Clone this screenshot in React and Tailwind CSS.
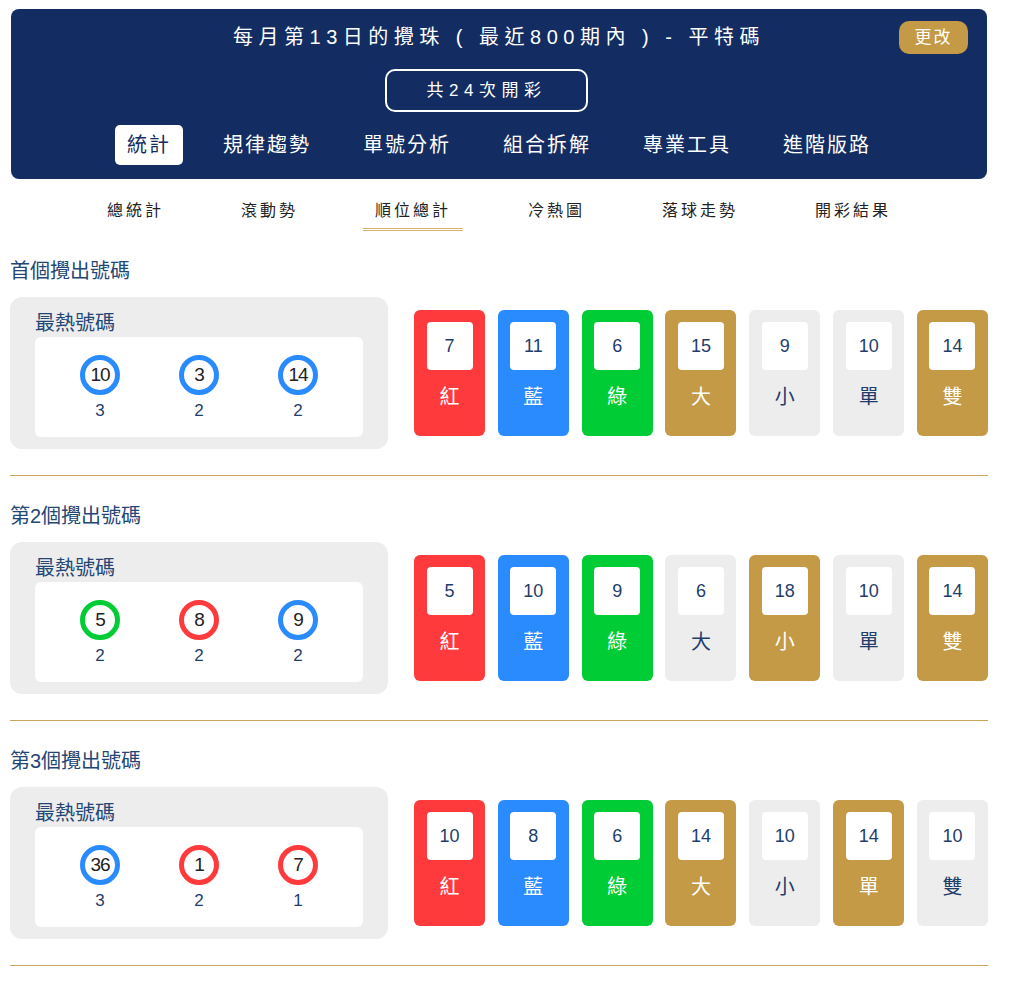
import React from 'react';

const FONT = { fontFamily: '"Liberation Sans", Arial, "Noto Sans CJK TC", sans-serif' };

const ringColor = {
  red: 'border-[#ff3a3d]',
  blue: 'border-[#2a8bff]',
  green: 'border-[#00cc35]',
};

const cardColor = {
  red: 'bg-[#ff3a3d] text-white',
  blue: 'bg-[#2a8bff] text-white',
  green: 'bg-[#00cc35] text-white',
  gold: 'bg-[#c49a46] text-white',
  grey: 'bg-[#ededed] text-[#1f3d6b]',
};

const sections = [
  {
    title: '首個攪出號碼',
    hot: [
      { n: 10, c: 'blue', cnt: 3 },
      { n: 3, c: 'blue', cnt: 2 },
      { n: 14, c: 'blue', cnt: 2 },
    ],
    cards: [
      { v: 7, l: '紅', c: 'red' },
      { v: 11, l: '藍', c: 'blue' },
      { v: 6, l: '綠', c: 'green' },
      { v: 15, l: '大', c: 'gold' },
      { v: 9, l: '小', c: 'grey' },
      { v: 10, l: '單', c: 'grey' },
      { v: 14, l: '雙', c: 'gold' },
    ],
  },
  {
    title: '第2個攪出號碼',
    hot: [
      { n: 5, c: 'green', cnt: 2 },
      { n: 8, c: 'red', cnt: 2 },
      { n: 9, c: 'blue', cnt: 2 },
    ],
    cards: [
      { v: 5, l: '紅', c: 'red' },
      { v: 10, l: '藍', c: 'blue' },
      { v: 9, l: '綠', c: 'green' },
      { v: 6, l: '大', c: 'grey' },
      { v: 18, l: '小', c: 'gold' },
      { v: 10, l: '單', c: 'grey' },
      { v: 14, l: '雙', c: 'gold' },
    ],
  },
  {
    title: '第3個攪出號碼',
    hot: [
      { n: 36, c: 'blue', cnt: 3 },
      { n: 1, c: 'red', cnt: 2 },
      { n: 7, c: 'red', cnt: 1 },
    ],
    cards: [
      { v: 10, l: '紅', c: 'red' },
      { v: 8, l: '藍', c: 'blue' },
      { v: 6, l: '綠', c: 'green' },
      { v: 14, l: '大', c: 'gold' },
      { v: 10, l: '小', c: 'grey' },
      { v: 14, l: '單', c: 'gold' },
      { v: 10, l: '雙', c: 'grey' },
    ],
  },
];

const mainTabs = ['統計', '規律趨勢', '單號分析', '組合拆解', '專業工具', '進階版路'];
const subTabs = ['總統計', '滾動勢', '順位總計', '冷熱圖', '落球走勢', '開彩結果'];

function Section({ data }) {
  return (
    <div className="border-b border-[#c9a55c] pb-[26px] pt-[26px]">
      <h3 className="text-[20px] leading-[28px] text-[#234775] mb-[12px]">{data.title}</h3>
      <div className="flex items-center gap-[26px]">
        <div className="w-[378px] bg-[#ededed] rounded-[12px] pt-[13px] pb-[12px] px-[25px]">
          <div className="text-[20px] leading-[27px] text-[#234775]">最熱號碼</div>
          <div className="bg-white rounded-[6px] h-[100px] flex justify-between px-[45px] pt-[18px]">
            {data.hot.map((h, i) => (
              <div key={i} className="flex flex-col items-center">
                <div className={`w-[40px] h-[40px] rounded-full border-[5px] ${ringColor[h.c]} flex items-center justify-center text-[19px] text-[#222] bg-white tracking-[-1px]`}>
                  {h.n}
                </div>
                <div className="text-[17px] leading-[32px] text-[#1f3d6b]">{h.cnt}</div>
              </div>
            ))}
          </div>
        </div>
        <div className="flex-1 flex justify-between">
          {data.cards.map((c, i) => (
            <div key={i} className={`w-[71px] h-[126px] rounded-[6px] ${cardColor[c.c]} flex flex-col items-center pt-[12px]`}>
              <div className="w-[46px] h-[48px] bg-white rounded-[4px] flex items-center justify-center text-[18px] text-[#1f3d6b]">
                {c.v}
              </div>
              <div className="mt-[13px] text-[20px] leading-[28px]">{c.l}</div>
            </div>
          ))}
        </div>
      </div>
    </div>
  );
}

export default function App() {
  return (
    <div className="bg-white min-h-screen" style={FONT}>
      <div className="w-[978px] ml-[10px] pt-[9px]">
        <div className="bg-[#132d62] rounded-[8px] ml-[1px] w-[976px] pt-[12px] pb-[14px] px-[19px]">
          <div className="grid grid-cols-[1fr_auto_1fr] items-center">
            <div />
            <div className="text-white text-[20px] tracking-[5.5px] leading-[33px]">每月第13日的攪珠 ( 最近800期內 ) - 平特碼</div>
            <div className="justify-self-end">
              <button className="bg-[#c49a46] text-white text-[17px] tracking-[2px] rounded-[10px] w-[69px] h-[33px]">更改</button>
            </div>
          </div>
          <div className="flex justify-center mt-[15px] pr-[25px]">
            <div className="border-2 border-white rounded-[10px] w-[203px] h-[43px] flex items-center justify-center text-white text-[17px] tracking-[5.5px]">
              共24次開彩
            </div>
          </div>
          <div className="flex justify-center gap-[28px] mt-[13px]">
            {mainTabs.map((t, i) => (
              <div
                key={t}
                className={`h-[40px] px-[12px] flex items-center text-[20px] tracking-[2px] rounded-[5px] ${i === 0 ? 'bg-white text-[#132d62]' : 'text-white'}`}
              >
                {t}
              </div>
            ))}
          </div>
        </div>

        <div className="flex justify-center gap-[53px] mt-[21px]">
          {subTabs.map((t, i) => (
            <div
              key={t}
              className={`px-[12px] pb-[6px] text-[16px] tracking-[3px] text-[#222] leading-[22px] ${i === 2 ? 'border-b-[3px] border-double border-[#d6b46a]' : 'border-b-[3px] border-transparent'}`}
            >
              {t}
            </div>
          ))}
        </div>

        <div>
          {sections.map((s) => (
            <Section key={s.title} data={s} />
          ))}
        </div>
      </div>
    </div>
  );
}
